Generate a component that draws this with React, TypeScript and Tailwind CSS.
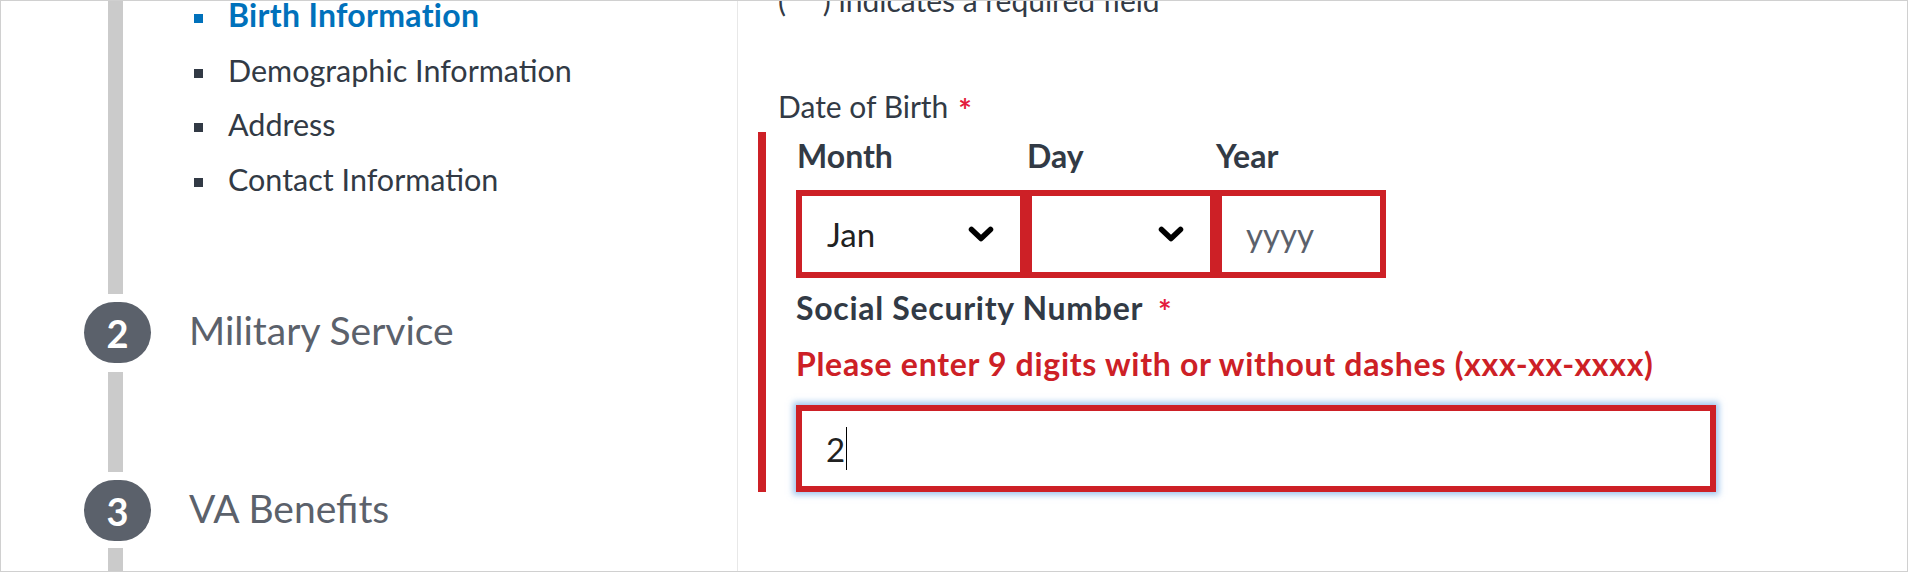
import type { ReactNode } from "react";

const subSteps = [
  { label: "Birth Information", active: true },
  { label: "Demographic Information", active: false },
  { label: "Address", active: false },
  { label: "Contact Information", active: false },
];

function Chevron() {
  return (
    <svg width="26" height="16" viewBox="0 0 26 16" className="shrink-0">
      <polyline
        points="3.5,3.5 13,12.5 22.5,3.5"
        fill="none"
        stroke="#000"
        strokeWidth="5.5"
        strokeLinecap="round"
        strokeLinejoin="round"
      />
    </svg>
  );
}

function StepCircle({ n }: { n: number }) {
  return (
    <div className="flex h-[61px] w-[67px] shrink-0 items-center justify-center rounded-full bg-[#5b616b] text-[38px] font-bold leading-none text-white">
      {n}
    </div>
  );
}

function StepRow({
  n,
  title,
  barClass,
}: {
  n: number;
  title: string;
  barClass: string;
}) {
  return (
    <div className="flex">
      <div className="ml-[83px] flex w-[67px] shrink-0 flex-col">
        <StepCircle n={n} />
        <div className={"ml-[24px] w-[15px] bg-[#cbcbcb] " + barClass} />
      </div>
      <div className="ml-[38px] mt-[-2px] text-[39px] leading-[61px] text-[#5b616b]">
        {title}
      </div>
    </div>
  );
}

function SelectBox({ value, className }: { value?: string; className: string }) {
  return (
    <div
      className={
        "flex h-[88px] items-center justify-between border-[6px] border-[#cd2026] bg-white pl-[25px] pr-[26px] text-[33px] leading-[38px] text-[#212121] " +
        className
      }
    >
      <span>{value}</span>
      <Chevron />
    </div>
  );
}

function Label({ children }: { children: ReactNode }) {
  return (
    <div className="text-[32px] font-bold leading-[38px] text-[#323a45]">
      {children}
    </div>
  );
}

function Required({ className }: { className: string }) {
  return (
    <span className={"mt-[9px] text-[32px] font-bold leading-[28px] tracking-normal text-[#e31c3d] " + className}>
      *
    </span>
  );
}

export default function App() {
  return (
    <div className="flex h-[572px] w-[1908px] overflow-hidden border border-[#d0d0d0] bg-white font-['Lato',sans-serif]">
      {/* step sidebar */}
      <div className="flex w-[737px] shrink-0 flex-col border-r border-[#e8e8e8]">
        <div className="flex h-[301px] shrink-0">
          <div className="ml-[83px] w-[67px] shrink-0">
            <div className="ml-[24px] h-[293px] w-[15px] bg-[#cbcbcb]" />
          </div>
          <ul className="ml-[38px] mt-[-13px]">
            {subSteps.map((s) => (
              <li
                key={s.label}
                className={
                  "flex items-start pl-[5px] leading-[54.5px] " +
                  (s.active
                    ? "text-[32px] font-bold tracking-[0.3px] text-[#0071bb]"
                    : "text-[30.5px] text-[#323a45]")
                }
              >
                <span
                  className={
                    "mr-[25px] mt-[26px] h-[9px] w-[9px] shrink-0 " +
                    (s.active ? "bg-[#0071bb]" : "bg-[#323a45]")
                  }
                />
                <span>{s.label}</span>
              </li>
            ))}
          </ul>
        </div>
        <StepRow n={2} title="Military Service" barClass="mt-[9px] mb-[8px] h-[100px]" />
        <StepRow n={3} title="VA Benefits" barClass="mt-[7px] h-[40px]" />
      </div>

      {/* form */}
      <div className="flex-1 pl-[40px]">
        <p className="mt-[-19px] text-[30px] leading-[36px] text-[#323a45]">
          (<span className="relative top-[-20px] mx-[12px] font-bold text-[#e31c3d]">*</span>) indicates a required field
        </p>
        <div className="mt-[70px] flex items-start text-[30px] leading-[36px] text-[#323a45]">
          <span>Date of Birth</span>
          <Required className="ml-[10px]" />
        </div>

        <div className="ml-[-20px] mt-[7px] w-[958px] border-l-[8px] border-[#cd2026] pl-[30px] pt-[5px]">
          <div className="flex">
            <div className="w-[230px] pl-[1px]">
              <Label>Month</Label>
            </div>
            <div className="w-[190px] pl-[1px]">
              <Label>Day</Label>
            </div>
            <div className="w-[170px]">
              <Label>Year</Label>
            </div>
          </div>
          <div className="mt-[15px] flex">
            <SelectBox value="Jan" className="w-[230px]" />
            <SelectBox className="w-[190px]" />
            <div className="flex h-[88px] w-[170px] items-center border-[6px] border-[#cd2026] bg-white pl-[24px] text-[33px] leading-[38px] text-[#5b616b]">
              yyyy
            </div>
          </div>

          <div className="mt-[11px] flex items-start text-[32px] font-bold leading-[38px] tracking-[0.7px] text-[#323a45]">
            <span>Social Security Number</span>
            <Required className="ml-[15px]" />
          </div>
          <div className="mt-[18px] text-[32px] font-bold leading-[38px] tracking-[0.7px] text-[#cd2026]">
            Please enter 9 digits with or without dashes (xxx-xx-xxxx)
          </div>
          <div className="mt-[22px] flex h-[87px] w-[920px] items-center border-[6px] border-[#cd2026] bg-white pl-[24px] text-[33px] leading-[38px] text-[#212121] shadow-[0_0_6px_3px_rgba(100,160,225,0.6)]">
            <span>2</span>
            <span className="ml-[1px] h-[43px] w-px bg-black" />
          </div>
        </div>
      </div>
    </div>
  );
}
